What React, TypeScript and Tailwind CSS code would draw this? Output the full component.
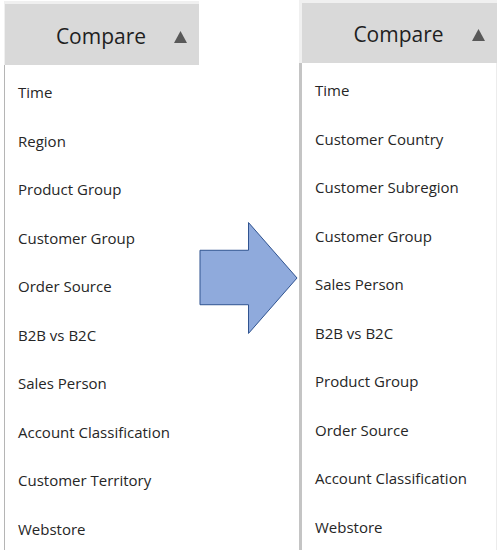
const leftItems = [
  'Time',
  'Region',
  'Product Group',
  'Customer Group',
  'Order Source',
  'B2B vs B2C',
  'Sales Person',
  'Account Classification',
  'Customer Territory',
  'Webstore',
];

const rightItems = [
  'Time',
  'Customer Country',
  'Customer Subregion',
  'Customer Group',
  'Sales Person',
  'B2B vs B2C',
  'Product Group',
  'Order Source',
  'Account Classification',
  'Webstore',
];

function ComparePanel({ items, thick }: { items: string[]; thick?: boolean }) {
  return (
    <div className="flex flex-col h-full">
      {/* Header */}
      <div
        className={`shrink-0 bg-[#d9d9d9] border-t-[3px] border-[#f0f0f0] flex items-center relative ${
          thick ? 'h-[63px] border-l-[3px]' : 'h-[64px] border-l'
        }`}
      >
        <span className="flex-1 text-center text-[21px] text-[#1f1f1f] pt-[4px] pr-[2px]">Compare</span>
        <svg
          width="13"
          height="12"
          viewBox="0 0 13 12"
          className={`absolute right-[12px] ${thick ? 'top-[26px]' : 'top-[27px]'}`}
        >
          <polygon points="6.5,0 13,12 0,12" fill="#595959" />
        </svg>
      </div>

      {/* Options */}
      <div
        className={`flex-1 bg-white pt-[3px] ${
          thick ? 'border-l-[3px] border-[#c4c4c4] border-r border-r-[#ececec]' : 'border-l border-[#b5b5b5]'
        }`}
      >
        {items.map((item) => (
          <div key={item} className="h-[48.5px] flex items-center pl-[13px] text-[15px] text-[#262626]">
            {item}
          </div>
        ))}
      </div>
    </div>
  );
}

function Arrow() {
  return (
    <svg width="101" height="114" viewBox="0 0 101 114" className="block">
      <polygon
        points="1,29 50,29 50,1 99,57 50,113 50,84 1,84"
        fill="#8faadc"
        stroke="#2f528f"
        strokeWidth="1"
      />
    </svg>
  );
}

export default function App() {
  return (
    <div
      className="w-[502px] h-[550px] bg-white flex overflow-hidden"
      style={{ fontFamily: '"Open Sans", "Noto Sans", sans-serif' }}
    >
      <div className="w-[195px] ml-[4px] mt-[1px] h-[549px]">
        <ComparePanel items={leftItems} />
      </div>
      <div className="w-[100px] flex items-start pt-[221px]">
        <Arrow />
      </div>
      <div className="w-[198px] h-[550px]">
        <ComparePanel items={rightItems} thick />
      </div>
    </div>
  );
}
